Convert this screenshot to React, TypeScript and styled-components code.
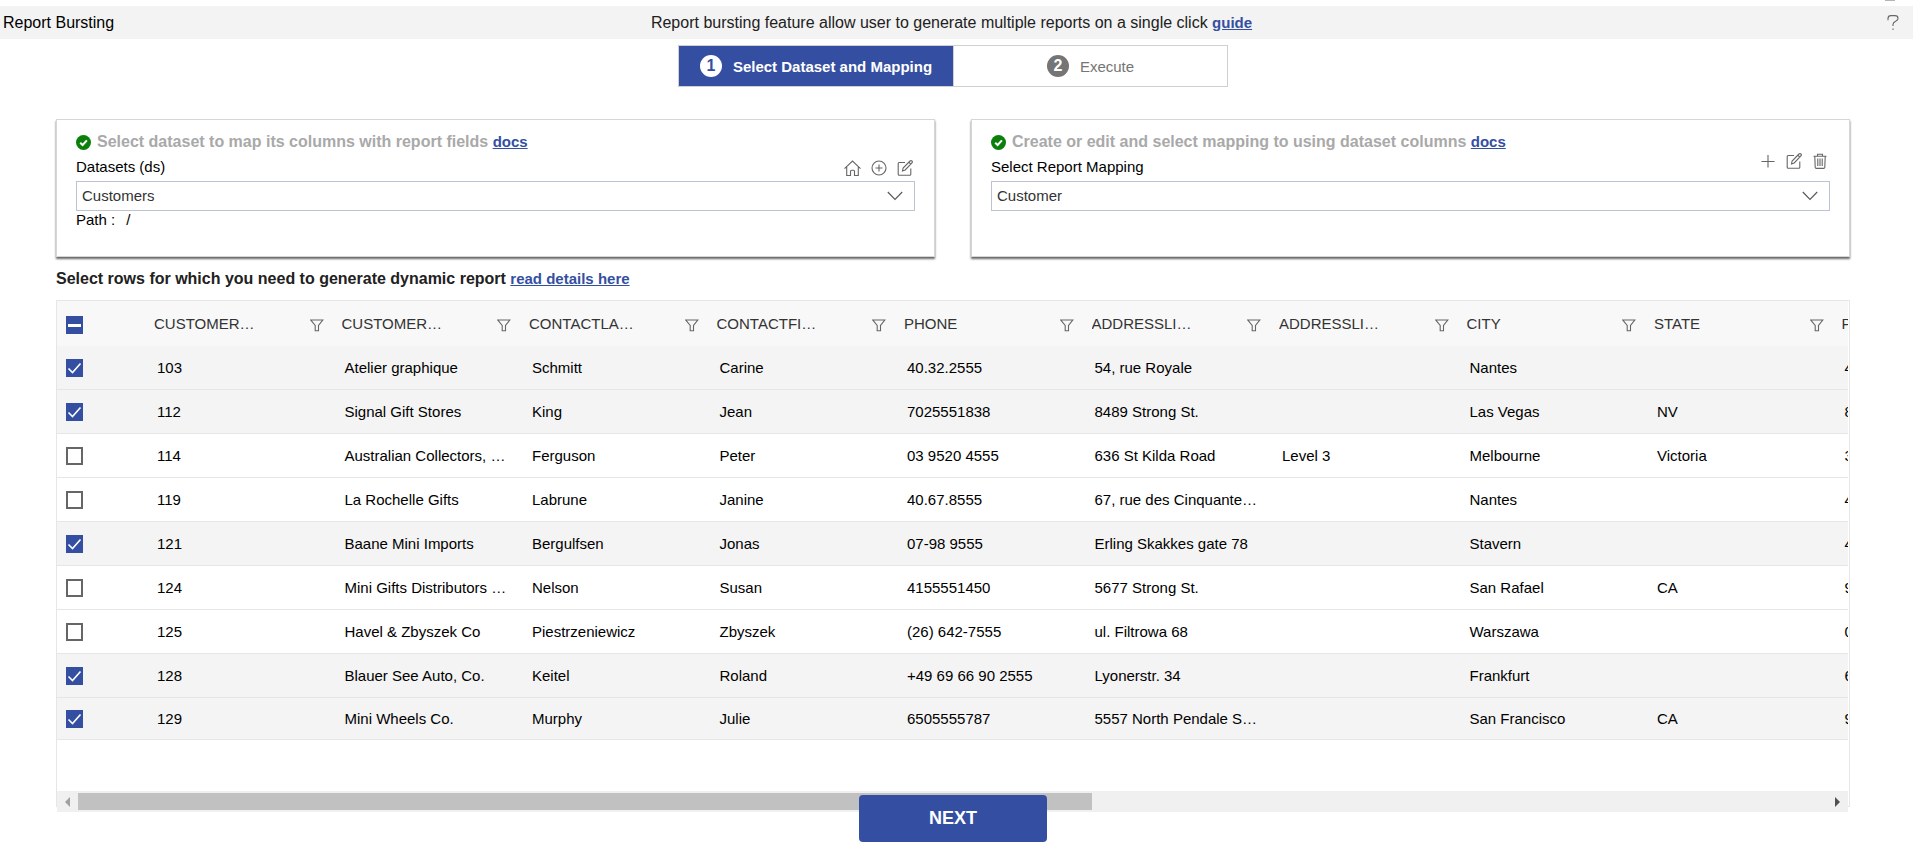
import React, { useState } from "react";
import styled, { createGlobalStyle } from "styled-components";

const BLUE = "#344fa1";

const GlobalStyle = createGlobalStyle`
  *, *::before, *::after { box-sizing: border-box; }
  body {
    margin: 0;
    background: #fff;
    color: #000;
    font-family: "Liberation Sans", Arial, sans-serif;
    font-size: 15px;
    line-height: 20px;
  }
  button, select, input { font-family: inherit; }
`;

const Page = styled.div`
  padding-top: 6px;
  position: relative;
`;

const TopSliver = styled.div`
  position: absolute;
  top: 0;
  right: 18px;
  width: 10px;
  height: 1px;
  background: #b4b4b4;
`;

const TopBar = styled.header`
  display: grid;
  grid-template-columns: 1fr auto 1fr;
  align-items: center;
  height: 33px;
  padding: 0 13px 0 3px;
  background: #f3f3f3;
  font-size: 16px;
`;

const Title = styled.h1`
  margin: 0;
  font-size: 16px;
  font-weight: 400;
`;

const Intro = styled.p`
  margin: 0;
  color: #212121;
`;

const DocLink = styled.a`
  color: ${BLUE};
  font-size: 15px;
  font-weight: 700;
  text-decoration: underline;
`;

const IconButton = styled.button`
  display: inline-flex;
  padding: 0;
  border: 0;
  background: none;
  color: #666;
  cursor: pointer;
`;

const HelpButton = styled(IconButton)`
  justify-self: end;
`;

const Content = styled.main`
  padding: 6px 63px 13px 56px;
`;

const Stepper = styled.nav`
  display: grid;
  grid-template-columns: 1fr 1fr;
  width: 550px;
  height: 42px;
  margin: 0 auto;
  border: 1px solid #d0d0d0;
`;

const Step = styled.button<{ $active?: boolean }>`
  display: flex;
  align-items: center;
  justify-content: center;
  gap: 11px;
  padding: 0;
  border: 0;
  background: ${(p) => (p.$active ? BLUE : "#fff")};
  color: ${(p) => (p.$active ? "#fff" : "#757575")};
  font-size: 15px;
  font-weight: ${(p) => (p.$active ? 700 : 400)};
  cursor: pointer;
  & + & { border-left: 1px solid #d0d0d0; }
`;

const StepNumber = styled.span<{ $active?: boolean }>`
  display: flex;
  align-items: center;
  justify-content: center;
  width: 22px;
  height: 22px;
  border-radius: 50%;
  background: ${(p) => (p.$active ? "#fff" : "#757575")};
  color: ${(p) => (p.$active ? BLUE : "#fff")};
  font-size: 16px;
  font-weight: 700;
`;

const Cards = styled.div`
  display: grid;
  grid-template-columns: 1fr 1fr;
  gap: 36px;
  margin-top: 32px;
`;

const Card = styled.section`
  height: 138px;
  padding: 12px 19px;
  border: 1px solid #d6d6d6;
  box-shadow: 0 2px 2px #666;
`;

const CardHeading = styled.h2`
  display: flex;
  align-items: center;
  gap: 6px;
  margin: 0;
  color: #a9a9a9;
  font-size: 16px;
  line-height: 20px;
`;

const FieldHead = styled.div`
  display: flex;
  justify-content: space-between;
  height: 29px;
  padding-top: 5px;
`;

const Tools = styled.div<{ $raised?: boolean }>`
  display: flex;
  align-items: flex-start;
  gap: 10px;
  padding-right: 2px;
  margin-top: ${(p) => (p.$raised ? "-4px" : "3px")};
`;

const SelectWrap = styled.div`
  display: grid;
  align-items: center;
  > * { grid-area: 1 / 1; }
  > svg { justify-self: end; margin-right: 12px; pointer-events: none; color: #555; }
`;

const Select = styled.select`
  appearance: none;
  width: 100%;
  height: 30px;
  padding: 0 30px 2px 5px;
  border: 1px solid #bcc3d3;
  border-radius: 0;
  background: #fff;
  color: #333;
  font-size: 15px;
`;

const PathLine = styled.div`
  display: flex;
  gap: 11px;
  line-height: 18px;
`;

const RowsHeading = styled.h2`
  margin: 12px 0 11px;
  color: #212121;
  font-size: 16px;
  line-height: 20px;
`;

const Grid = styled.div`
  height: 507px;
  padding-right: 1px;
  border: 1px solid #e6e6e6;
`;

const GridBody = styled.div`
  height: 490px;
  overflow: hidden;
`;

const Table = styled.table`
  width: 1955px;
  table-layout: fixed;
  border-collapse: separate;
  border-spacing: 0;
`;

const CheckCol = styled.col`
  width: 80px;
`;

const HeadCell = styled.th`
  height: 45px;
  padding: 2px 1px 0 17px;
  background: #f8f8f8;
  color: #333;
  font-weight: 400;
  text-align: left;
`;

const HeadInner = styled.div`
  display: flex;
  align-items: center;
  justify-content: space-between;
`;

const HeadLabel = styled.span`
  width: 108px;
  padding-bottom: 2px;
  overflow: hidden;
  white-space: nowrap;
  text-overflow: ellipsis;
`;

const Row = styled.tr<{ $selected: boolean }>`
  background: ${(p) => (p.$selected ? "#f4f4f4" : "#fff")};
  td { height: 44px; }
  &:last-child td { height: 42px; }
`;

const Cell = styled.td`
  padding: 1px 3px 0 20px;
  border-bottom: 1px solid #e6e6e6;
  overflow: hidden;
  white-space: nowrap;
  text-overflow: ellipsis;
`;

const CheckHeadCell = styled(HeadCell)`
  padding: 2px 0 0 9px;
`;

const CheckCell = styled(Cell)`
  padding: 1px 0 0 9px;
`;

const Box = styled.span`
  display: grid;
  width: 17px;
  height: 18px;
  > * { grid-area: 1 / 1; }
  > svg { pointer-events: none; }
`;

const CheckInput = styled.input`
  appearance: none;
  width: 17px;
  height: 18px;
  margin: 0;
  border: 2px solid #666;
  background: #fff;
  &:checked, &:indeterminate { border-color: ${BLUE}; background: ${BLUE}; }
`;

const ScrollBar = styled.div`
  display: grid;
  grid-template-columns: 21px 1fr 21px;
  align-items: center;
  height: 21px;
  background: #f0f0f0;
  color: #505050;
`;

const ScrollArrow = styled(IconButton)<{ $off?: boolean }>`
  justify-content: center;
  color: ${(p) => (p.$off ? "#a0a0a0" : "#505050")};
`;

const Thumb = styled.div`
  width: 58%;
  height: 17px;
  background: #c1c1c1;
`;

const Footer = styled.footer`
  position: relative;
  display: flex;
  justify-content: center;
  margin-top: -12px;
`;

const NextButton = styled.button`
  width: 188px;
  height: 47px;
  padding: 0;
  border: 0;
  border-radius: 4px;
  background: ${BLUE};
  color: #fff;
  font-size: 18px;
  font-weight: 700;
  cursor: pointer;
`;

const CheckBadge = () => (
  <svg width="15" height="15" viewBox="0 0 15 15" aria-hidden="true">
    <circle cx="7.5" cy="7.5" r="7.5" fill="#0a800a" />
    <path d="M4.2 7.8 6.6 10l4.3-4.6" fill="none" stroke="#fff" strokeWidth="2" />
  </svg>
);

const Icon = ({ children, w = 16, h = 16 }: { children: React.ReactNode; w?: number; h?: number }) => (
  <svg width={w} height={h} viewBox={`0 0 ${w} ${h}`} fill="none" stroke="currentColor" strokeWidth="1.1" aria-hidden="true">
    {children}
  </svg>
);

const HomeIcon = () => (
  <Icon w={17}>
    <path d="M.5 8.6 8.5 1l8 7.6M2.7 6.8v8.7h3.8v-4.2q0-1 1-1h2q1 0 1 1v4.2h3.8V6.8" />
  </Icon>
);
const AddCircleIcon = () => (
  <Icon>
    <circle cx="8" cy="8" r="7" />
    <path d="M8 4.5v7M4.5 8h7" />
  </Icon>
);
const EditIcon = () => (
  <Icon>
    <path d="M8 2.5H2.2q-1 0-1 1v10.800q0 1 1 1h10.600q1 0 1-1V8.500M5.500 11l.6-3L13 1q1-.8 1.900 0t0 2L8.200 10zM11.800 2.200l2 2" />
  </Icon>
);
const PlusIcon = () => (
  <Icon>
    <path d="M8 2v12.500M1.500 8.500h13" />
  </Icon>
);
const TrashIcon = () => (
  <Icon>
    <path d="M1.500 3.200h13M5.500 3V1.200h5V3M2.800 3.200l.4 11q.1 1.200 1.200 1.200h7.200q1.100 0 1.200-1.200l.4-11M5.800 5.500v7.500M8 5.500v7.500M10.200 5.500v7.500" />
  </Icon>
);
const FunnelIcon = () => (
  <Icon w={14} h={14}>
    <path d="M.8 2h12L8.500 7.500V12.800H5.200V7.500z" />
  </Icon>
);
const HelpIcon = () => (
  <Icon w={14} h={18}>
    <path d="M2 6.200V4.500Q2 1.600 5 1.600h4q3 0 3 2.600 0 1.800-2 2.900Q7 8.600 7 10.500V12M7 14.500V16" />
  </Icon>
);
const ChevronIcon = () => (
  <Icon>
    <path d="M.8 4 8 11.500 15.200 4" />
  </Icon>
);

type CheckProps = { label: string; checked: boolean; mixed?: boolean; onChange: () => void };

const Check = ({ label, checked, mixed = false, onChange }: CheckProps) => (
  <Box>
    <CheckInput
      type="checkbox"
      aria-label={label}
      checked={checked}
      onChange={onChange}
      ref={(el) => {
        if (el) el.indeterminate = mixed;
      }}
    />
    {(checked || mixed) && (
      <svg width="17" height="18" viewBox="0 0 17 18" fill="none" stroke="#fff" aria-hidden="true">
        {mixed ? <path d="M2 9.500h13" strokeWidth="3" /> : <path d="M2.500 9.500 6.500 13.500 14.500 4.500" strokeWidth="1.600" />}
      </svg>
    )}
  </Box>
);

const columns = [
  "CUSTOMERNUMBER",
  "CUSTOMERNAME",
  "CONTACTLASTNAME",
  "CONTACTFIRSTNAME",
  "PHONE",
  "ADDRESSLINE1",
  "ADDRESSLINE2",
  "CITY",
  "STATE",
  "POSTALCODE",
];

const rows = [
  ["103", "Atelier graphique", "Schmitt", "Carine", "40.32.2555", "54, rue Royale", "", "Nantes", "", "44000"],
  ["112", "Signal Gift Stores", "King", "Jean", "7025551838", "8489 Strong St.", "", "Las Vegas", "NV", "83030"],
  ["114", "Australian Collectors, Co.", "Ferguson", "Peter", "03 9520 4555", "636 St Kilda Road", "Level 3", "Melbourne", "Victoria", "3004"],
  ["119", "La Rochelle Gifts", "Labrune", "Janine", "40.67.8555", "67, rue des Cinquante Otages", "", "Nantes", "", "44000"],
  ["121", "Baane Mini Imports", "Bergulfsen", "Jonas", "07-98 9555", "Erling Skakkes gate 78", "", "Stavern", "", "4110"],
  ["124", "Mini Gifts Distributors Ltd.", "Nelson", "Susan", "4155551450", "5677 Strong St.", "", "San Rafael", "CA", "97562"],
  ["125", "Havel & Zbyszek Co", "Piestrzeniewicz", "Zbyszek", "(26) 642-7555", "ul. Filtrowa 68", "", "Warszawa", "", "01-012"],
  ["128", "Blauer See Auto, Co.", "Keitel", "Roland", "+49 69 66 90 2555", "Lyonerstr. 34", "", "Frankfurt", "", "60528"],
  ["129", "Mini Wheels Co.", "Murphy", "Julie", "6505555787", "5557 North Pendale Street", "", "San Francisco", "CA", "94217"],
];

export default function App() {
  const [selected, setSelected] = useState<string[]>(["103", "112", "121", "128", "129"]);
  const all = selected.length === rows.length;
  const toggle = (id: string) =>
    setSelected((s) => (s.includes(id) ? s.filter((x) => x !== id) : [...s, id]));

  return (
    <Page>
      <GlobalStyle />
      <TopSliver />
      <TopBar>
        <Title>Report Bursting</Title>
        <Intro>
          Report bursting feature allow user to generate multiple reports on a single click{" "}
          <DocLink href="#guide">guide</DocLink>
        </Intro>
        <HelpButton aria-label="Help">
          <HelpIcon />
        </HelpButton>
      </TopBar>

      <Content>
        <Stepper aria-label="Steps">
          <Step $active aria-current="step">
            <StepNumber $active>1</StepNumber>
            Select Dataset and Mapping
          </Step>
          <Step>
            <StepNumber>2</StepNumber>
            Execute
          </Step>
        </Stepper>

        <Cards>
          <Card>
            <CardHeading>
              <CheckBadge />
              <span>
                Select dataset to map its columns with report fields <DocLink href="#dataset-docs">docs</DocLink>
              </span>
            </CardHeading>
            <FieldHead>
              <label htmlFor="dataset">Datasets (ds)</label>
              <Tools>
                <IconButton aria-label="Home"><HomeIcon /></IconButton>
                <IconButton aria-label="Add dataset"><AddCircleIcon /></IconButton>
                <IconButton aria-label="Edit dataset"><EditIcon /></IconButton>
              </Tools>
            </FieldHead>
            <SelectWrap>
              <Select id="dataset">
                <option>Customers</option>
              </Select>
              <ChevronIcon />
            </SelectWrap>
            <PathLine>
              <span>Path :</span>
              <span>/</span>
            </PathLine>
          </Card>

          <Card>
            <CardHeading>
              <CheckBadge />
              <span>
                Create or edit and select mapping to using dataset columns <DocLink href="#mapping-docs">docs</DocLink>
              </span>
            </CardHeading>
            <FieldHead>
              <label htmlFor="mapping">Select Report Mapping</label>
              <Tools $raised>
                <IconButton aria-label="Add mapping"><PlusIcon /></IconButton>
                <IconButton aria-label="Edit mapping"><EditIcon /></IconButton>
                <IconButton aria-label="Delete mapping"><TrashIcon /></IconButton>
              </Tools>
            </FieldHead>
            <SelectWrap>
              <Select id="mapping">
                <option>Customer</option>
              </Select>
              <ChevronIcon />
            </SelectWrap>
          </Card>
        </Cards>

        <RowsHeading>
          Select rows for which you need to generate dynamic report{" "}
          <DocLink href="#row-details">read details here</DocLink>
        </RowsHeading>

        <Grid>
          <GridBody>
            <Table>
              <colgroup>
                <CheckCol />
                {columns.map((c) => (
                  <col key={c} />
                ))}
              </colgroup>
              <thead>
                <tr>
                  <CheckHeadCell>
                    <Check
                      label="Select all rows"
                      checked={all}
                      mixed={selected.length > 0 && !all}
                      onChange={() => setSelected(all ? [] : rows.map((r) => r[0]))}
                    />
                  </CheckHeadCell>
                  {columns.map((c) => (
                    <HeadCell key={c}>
                      <HeadInner>
                        <HeadLabel>{c}</HeadLabel>
                        <IconButton aria-label={`Filter ${c}`}><FunnelIcon /></IconButton>
                      </HeadInner>
                    </HeadCell>
                  ))}
                </tr>
              </thead>
              <tbody>
                {rows.map((r) => (
                  <Row key={r[0]} $selected={selected.includes(r[0])}>
                    <CheckCell>
                      <Check
                        label={`Select row ${r[0]}`}
                        checked={selected.includes(r[0])}
                        onChange={() => toggle(r[0])}
                      />
                    </CheckCell>
                    {r.map((value, i) => (
                      <Cell key={columns[i]}>{value}</Cell>
                    ))}
                  </Row>
                ))}
              </tbody>
            </Table>
          </GridBody>
          <ScrollBar>
            <ScrollArrow $off aria-label="Scroll left">
              <svg width="5" height="10" viewBox="0 0 5 10" fill="currentColor"><path d="M5 0v10L0 5z" /></svg>
            </ScrollArrow>
            <Thumb />
            <ScrollArrow aria-label="Scroll right">
              <svg width="5" height="10" viewBox="0 0 5 10" fill="currentColor"><path d="M0 0v10l5-5z" /></svg>
            </ScrollArrow>
          </ScrollBar>
        </Grid>

        <Footer>
          <NextButton>NEXT</NextButton>
        </Footer>
      </Content>
    </Page>
  );
}
